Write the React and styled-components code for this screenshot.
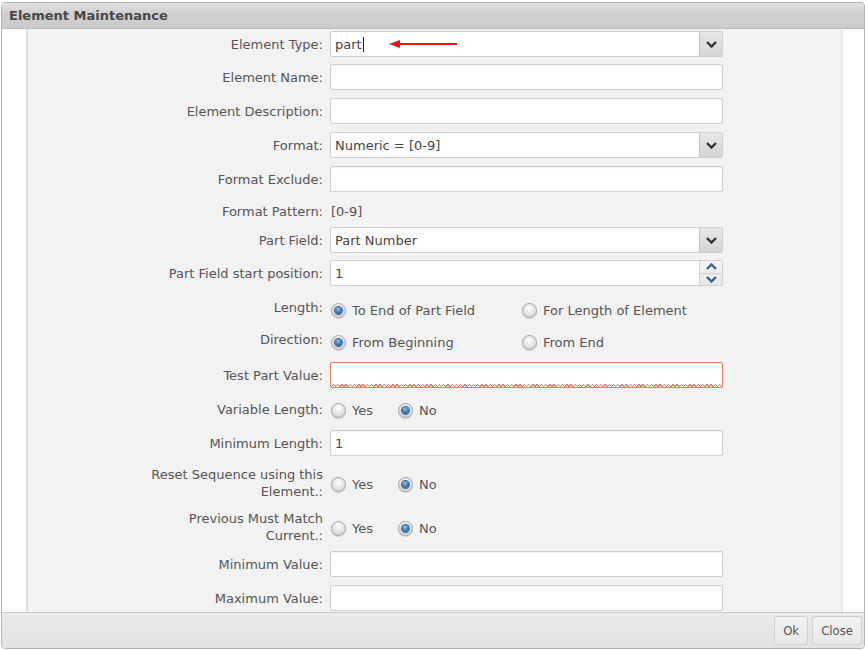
import React from 'react'
import styled, { createGlobalStyle } from 'styled-components'

const GlobalStyle = createGlobalStyle`
  html, body {
    margin: 0;
    padding: 0;
    background: #ffffff;
  }
  body {
    font-family: "DejaVu Sans", Verdana, sans-serif;
    font-size: 13px;
    color: #555;
  }
`

const Chevron = ({ up, color = '#333' }) => (
  <svg width="11" height="7" viewBox="0 0 11 7">
    <polyline
      points={up ? '1,6 5.5,1.5 10,6' : '1,1 5.5,5.5 10,1'}
      fill="none"
      stroke={color}
      strokeWidth="2.4"
    />
  </svg>
)

const Radio = ({ checked, label, width }) => (
  <RadioOption $width={width}>
    <RadioDot $checked={checked} />
    <span>{label}</span>
  </RadioOption>
)

const App = () => {
  return (
    <>
      <GlobalStyle />
      <Dialog>
        <TitleBar>Element Maintenance</TitleBar>
        <Body>
          <Gutter />
          <Panel>
            <Form>
              <Row $pad="4px 0 3px">
                <Label>Element Type:</Label>
                <SelectBox>
                  <Value>
                    part<Caret />
                    <Arrow width="70" height="10" viewBox="0 0 70 10">
                      <line x1="8" y1="5" x2="68" y2="5" stroke="#e01818" strokeWidth="2" />
                      <polygon points="0,5 11,1 11,9" fill="#e01818" />
                    </Arrow>
                  </Value>
                  <DropButton><Chevron /></DropButton>
                </SelectBox>
              </Row>
              <Row>
                <Label>Element Name:</Label>
                <Input />
              </Row>
              <Row>
                <Label>Element Description:</Label>
                <Input />
              </Row>
              <Row>
                <Label>Format:</Label>
                <SelectBox>
                  <Value>Numeric = [0-9]</Value>
                  <DropButton><Chevron /></DropButton>
                </SelectBox>
              </Row>
              <Row>
                <Label>Format Exclude:</Label>
                <Input />
              </Row>
              <Row $pad="6px 0 2px" $min={19}>
                <Label>Format Pattern:</Label>
                <PlainValue>[0-9]</PlainValue>
              </Row>
              <Row $pad="4px 0 3px">
                <Label>Part Field:</Label>
                <SelectBox>
                  <Value>Part Number</Value>
                  <DropButton><Chevron /></DropButton>
                </SelectBox>
              </Row>
              <Row>
                <Label>Part Field start position:</Label>
                <SelectBox>
                  <Value>1</Value>
                  <Spinner>
                    <SpinHalf><Chevron up color="#3a5d9c" /></SpinHalf>
                    <SpinHalf $bottom><Chevron color="#3a5d9c" /></SpinHalf>
                  </Spinner>
                </SelectBox>
              </Row>
              <Row $pad="6px 0 2px">
                <Label $top>Length:</Label>
                <RadioGroup>
                  <Radio checked label="To End of Part Field" width={191} />
                  <Radio label="For Length of Element" />
                </RadioGroup>
              </Row>
              <Row>
                <Label $top>Direction:</Label>
                <RadioGroup>
                  <Radio checked label="From Beginning" width={191} />
                  <Radio label="From End" />
                </RadioGroup>
              </Row>
              <Row>
                <Label>Test Part Value:</Label>
                <Input $error />
              </Row>
              <Row>
                <Label>Variable Length:</Label>
                <RadioGroup>
                  <Radio label="Yes" width={67} />
                  <Radio checked label="No" />
                </RadioGroup>
              </Row>
              <Row>
                <Label>Minimum Length:</Label>
                <Input>1</Input>
              </Row>
              <Row $pad="6px 0 4px">
                <Label>Reset Sequence using this<br />Element.:</Label>
                <RadioGroup>
                  <Radio label="Yes" width={67} />
                  <Radio checked label="No" />
                </RadioGroup>
              </Row>
              <Row $pad="6px 0 3px">
                <Label>Previous Must Match<br />Current.:</Label>
                <RadioGroup>
                  <Radio label="Yes" width={67} />
                  <Radio checked label="No" />
                </RadioGroup>
              </Row>
              <Row>
                <Label>Minimum Value:</Label>
                <Input />
              </Row>
              <Row>
                <Label>Maximum Value:</Label>
                <Input />
              </Row>
            </Form>
          </Panel>
          <Gutter $right />
        </Body>
        <Footer>
          <Button>Ok</Button>
          <Button>Close</Button>
        </Footer>
      </Dialog>
    </>
  )
}

export default App

const Dialog = styled.div`
  margin: 2px 0 0 1px;
  width: 862px;
  height: 645px;
  border: 1px solid #b4b4b4;
  border-radius: 4px;
  display: flex;
  flex-direction: column;
  overflow: hidden;
  background: #fff;
`

const TitleBar = styled.div`
  height: 25px;
  flex-shrink: 0;
  display: flex;
  align-items: center;
  padding-left: 7px;
  background: linear-gradient(#e2e2e2, #d0d0d0 40%, #cbcbcb);
  border-bottom: 1px solid #bdbdbd;
  font-weight: bold;
  font-size: 13px;
  color: #484848;
`

const Body = styled.div`
  flex: 1;
  display: flex;
  overflow: hidden;
  background: #fff;
`

const Gutter = styled.div`
  width: ${p => (p.$right ? '20px' : '24px')};
  flex-shrink: 0;
  background: #fff;
`

const Panel = styled.div`
  width: 813px;
  flex-shrink: 0;
  background: #f2f2f2;
  border-left: 2px solid #dedede;
  border-right: 2px solid #e8e8e8;
  overflow: hidden;
`

const Form = styled.div`
  margin-top: -2px;
  display: flex;
  flex-direction: column;
`

const Row = styled.div`
  display: grid;
  grid-template-columns: 295px 393px;
  column-gap: 7px;
  align-items: center;
  min-height: ${p => p.$min || 26}px;
  padding: ${p => p.$pad || '4px 0'};
`

const Label = styled.div`
  text-align: right;
  line-height: 17px;
  color: #555;
  align-self: ${p => (p.$top ? 'start' : 'center')};
  margin-top: ${p => (p.$top ? '3px' : '0')};
`

const Input = styled.div`
  box-sizing: border-box;
  height: 26px;
  display: flex;
  align-items: center;
  padding-left: 4px;
  background: #fff;
  border: 1px solid ${p => (p.$error ? '#e0805e' : '#cfcfcf')};
  border-radius: 2px;
  box-shadow: inset 0 1px 2px rgba(0, 0, 0, 0.06);
  color: #444;
  ${p =>
    p.$error &&
    `
    background-image:
      repeating-linear-gradient(45deg, #f07a6a 0 1px, transparent 1px 3px),
      repeating-linear-gradient(-45deg, #f07a6a 0 1px, transparent 1px 3px);
    background-size: 100% 3px;
    background-position: bottom left;
    background-repeat: no-repeat;
  `}
`

const SelectBox = styled.div`
  box-sizing: border-box;
  height: 26px;
  display: flex;
  background: #fff;
  border: 1px solid #cfcfcf;
  border-radius: 2px;
  color: #444;
`

const Value = styled.div`
  position: relative;
  flex: 1;
  display: flex;
  align-items: center;
  padding-left: 4px;
`

const Caret = styled.span`
  display: inline-block;
  width: 1px;
  height: 15px;
  margin-left: 1px;
  background: #222;
`

const Arrow = styled.svg`
  position: absolute;
  left: 58px;
  top: 7px;
`

const DropButton = styled.div`
  width: 22px;
  display: flex;
  align-items: center;
  justify-content: center;
  border-left: 1px solid #c4c4c4;
  background: linear-gradient(#e8e8e8, #d4d4d4);
`

const Spinner = styled.div`
  width: 22px;
  display: flex;
  flex-direction: column;
  border-left: 1px solid #d0d0d0;
  background: linear-gradient(#f4f4f4, #e6e6e6);
`

const SpinHalf = styled.div`
  flex: 1;
  display: flex;
  align-items: center;
  justify-content: center;
  border-top: ${p => (p.$bottom ? '1px solid #d0d0d0' : 'none')};
`

const PlainValue = styled.div`
  color: #555;
  padding-left: 1px;
`

const RadioGroup = styled.div`
  display: flex;
  align-items: center;
  padding-top: 3px;
`

const RadioOption = styled.label`
  display: flex;
  align-items: center;
  gap: 6px;
  width: ${p => (p.$width ? `${p.$width}px` : 'auto')};
  color: #555;
`

const RadioDot = styled.span`
  position: relative;
  box-sizing: border-box;
  width: 15px;
  height: 15px;
  margin-left: 1px;
  border-radius: 50%;
  border: 1px solid #a4a4a4;
  background: radial-gradient(circle at 50% 35%, #ffffff, #dadada 70%, #c6c6c6);
  box-shadow: 0 1px 1px rgba(0, 0, 0, 0.15);
  &::after {
    content: '';
    display: ${p => (p.$checked ? 'block' : 'none')};
    position: absolute;
    left: 3px;
    top: 3px;
    width: 7px;
    height: 7px;
    border-radius: 50%;
    background: radial-gradient(circle at 45% 35%, #8cc6f0, #2b76b8 55%, #174a80);
    box-shadow: 0 0 0 1px #44648a;
  }
`

const Footer = styled.div`
  height: 35px;
  flex-shrink: 0;
  display: flex;
  justify-content: flex-end;
  align-items: center;
  gap: 4px;
  padding-right: 2px;
  border-top: 1px solid #c9c9c9;
  background: linear-gradient(#eaeaea, #e2e2e2);
`

const Button = styled.div`
  box-sizing: border-box;
  height: 29px;
  padding: 0 8px;
  display: flex;
  align-items: center;
  border: 1px solid #d0d0d0;
  border-radius: 3px;
  background: linear-gradient(#f2f2f2, #e8e8e8);
  font-family: "DejaVu Sans Condensed", "DejaVu Sans", sans-serif;
  font-size: 13px;
  color: #555;
`
